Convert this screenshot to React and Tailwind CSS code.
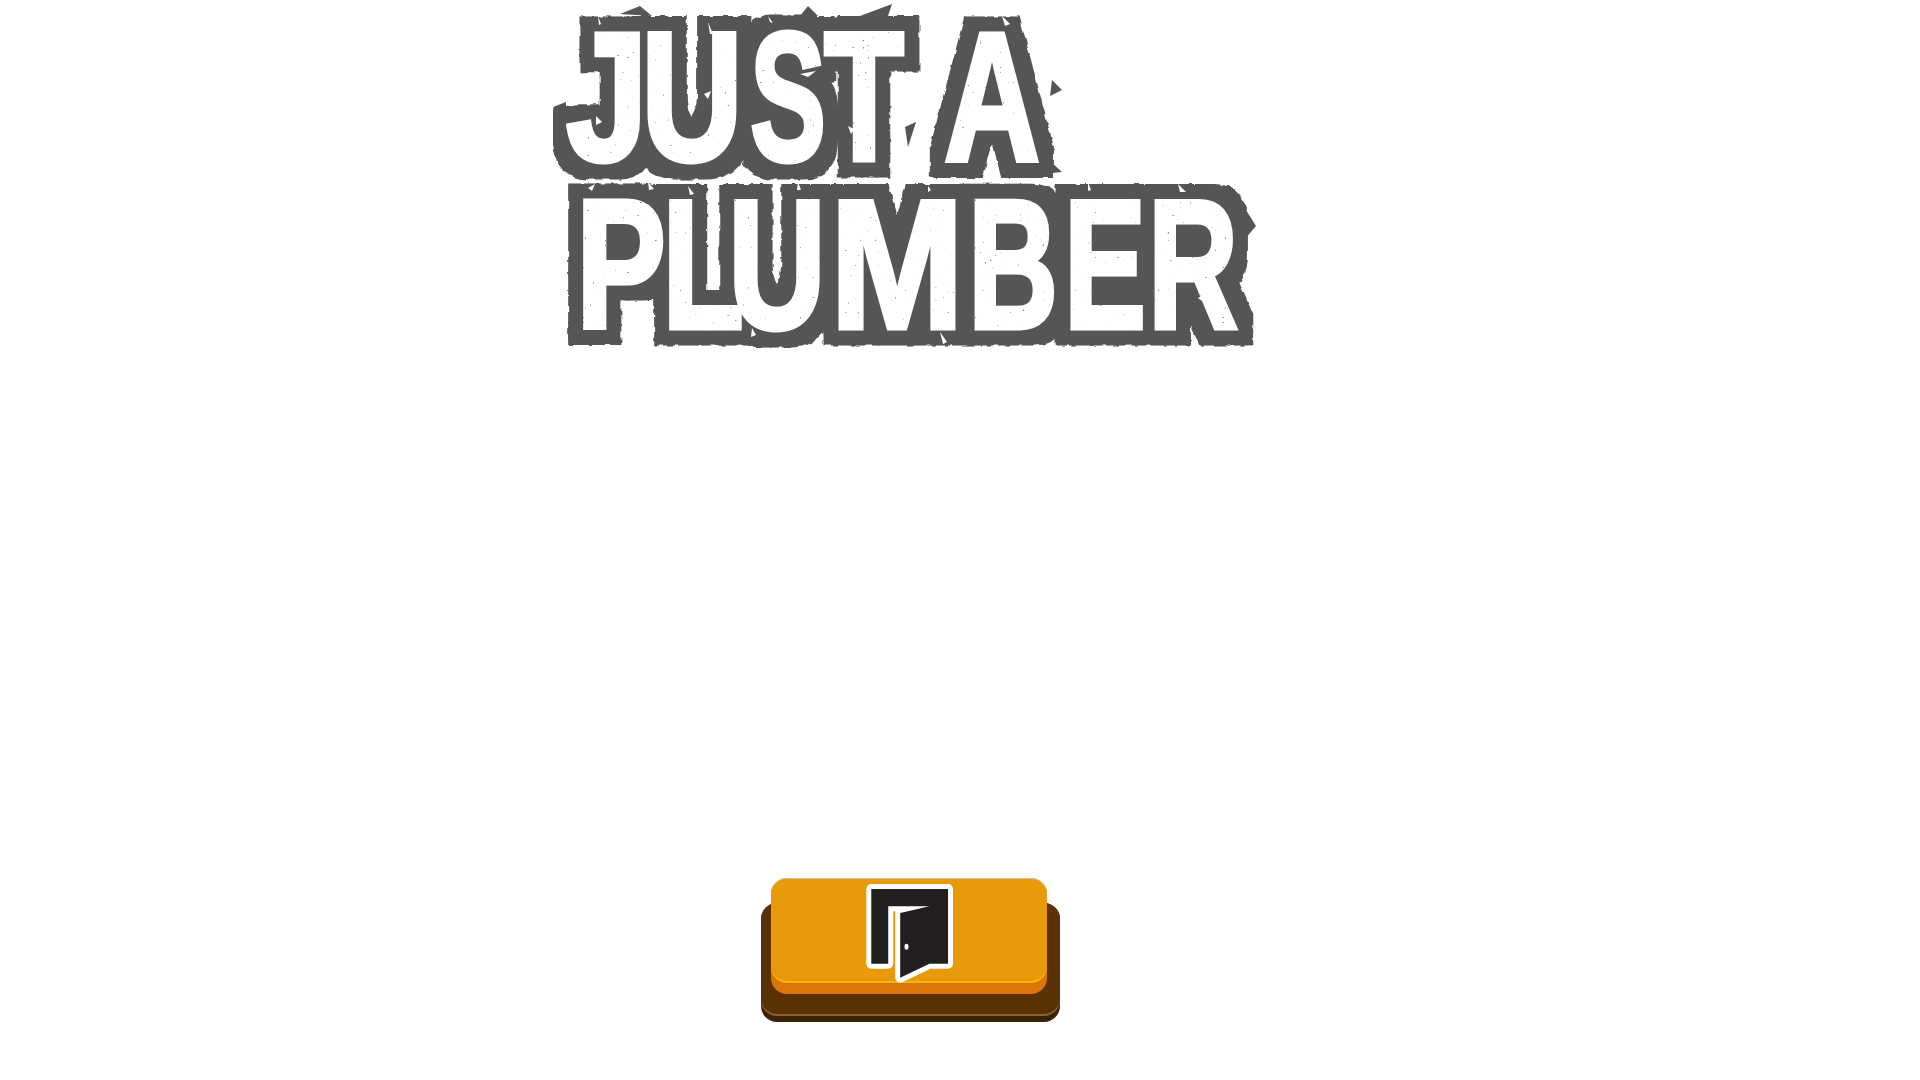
const topLetters = [
  { c: "J", x: 566, w: 82 },
  { c: "U", x: 641, w: 102 },
  { c: "S", x: 750, w: 76 },
  { c: "T", x: 824, w: 80 },
  { c: "A", x: 944, w: 96 },
];

const bottomLetters = [
  { c: "P", x: 576, w: 90 },
  { c: "L", x: 662, w: 82 },
  { c: "U", x: 728, w: 98 },
  { c: "M", x: 830, w: 134 },
  { c: "B", x: 968, w: 90 },
  { c: "E", x: 1064, w: 82 },
  { c: "R", x: 1148, w: 90 },
];

// scratches over the outline, in page coordinates
const scratches = [
  "M598 14l3 8l-2 1z", "M688 18l4 8l-3 1z", "M708 20l5 12l-3 0z", "M768 14l2 6l3 1z", "M832 12l10 -4l-6 8z",
  "M1002 14l8 8l-5 2z", "M704 92l7 -3l-3 8z", "M800 72l16 -3l-8 6z", "M848 124l3 8l3 -5z", "M596 114l6 6l-6 3z",
  "M588 186l7 -4l-3 7z", "M648 180l6 7l-5 1z", "M688 184l6 8l-4 1z", "M798 180l3 8l-4 0z", "M928 184l3 4l-3 2z",
  "M1088 180l3 8l-3 1z", "M1178 182l8 8l-6 0z", "M752 326l4 7l-5 2z", "M1198 296l7 -4l-3 7z", "M816 336l6 4l-5 1z",
  "M940 330l3 12l4 -2z",
];
const spikes = [
  "M620 12 L640 4 L652 14Z", "M800 14 L808 4 L818 14Z", "M860 14 L892 2 L888 14Z",
  "M553 105 L566 100 L566 120Z", "M1052 78 L1062 88 L1050 94Z", "M1040 150 L1062 170 L1042 172Z",
  "M905 125 L916 120 L908 145Z", "M1246 208 L1256 224 L1244 238Z",
];

function Logo() {
  const renderRow = (letters, y) =>
    letters.map((l) => (
      <tspan key={l.c + l.x} x={l.x} y={y} textLength={l.w} lengthAdjust="spacingAndGlyphs">
        {l.c}
      </tspan>
    ));

  return (
    <svg viewBox="553 0 703 346" className="block w-[703px] h-[346px]">
      <defs>
        <filter id="distress" filterUnits="userSpaceOnUse" x="540" y="0" width="730" height="346" colorInterpolationFilters="sRGB">
          <feTurbulence type="fractalNoise" baseFrequency="0.12" numOctaves="2" seed="4" result="wobble" />
          <feMorphology in="SourceAlpha" operator="dilate" radius="15" result="fat" />
          <feDisplacementMap in="fat" in2="wobble" scale="4" xChannelSelector="R" yChannelSelector="G" result="rough" />
          <feFlood floodColor="#555555" />
          <feComposite in2="rough" operator="in" result="outline" />
          {/* a few grey pits on the white letters */}
          <feTurbulence type="fractalNoise" baseFrequency="0.4" numOctaves="1" seed="9" />
          <feColorMatrix values="0 0 0 0 0.55  0 0 0 0 0.55  0 0 0 0 0.55  0 0 14 0 -10.2" />
          <feComposite in2="SourceAlpha" operator="in" result="pits" />
          <feMerge>
            <feMergeNode in="outline" />
            <feMergeNode in="SourceGraphic" />
            <feMergeNode in="pits" />
          </feMerge>
        </filter>
      </defs>
      {spikes.map((d) => <path key={d} d={d} fill="#555555" />)}
      <g filter="url(#distress)">
        <text
          fontFamily="'Liberation Sans', sans-serif"
          fontWeight="700"
          fontSize="184"
          fill="#ffffff"
          stroke="#ffffff"
          strokeWidth="5"
          strokeLinejoin="miter"
        >
          {renderRow(topLetters, 158)}
        </text>
        <text
          fontFamily="'Liberation Sans', sans-serif"
          fontWeight="700"
          fontSize="184"
          fill="#ffffff"
          stroke="#ffffff"
          strokeWidth="5"
          strokeLinejoin="miter"
        >
          {renderRow(bottomLetters, 326)}
        </text>
      </g>
      {scratches.map((d) => <path key={d} d={d} fill="#ffffff" />)}
    </svg>
  );
}

function DoorIcon() {
  return (
    <svg viewBox="376 64 272 304" className="block w-[91px] h-[101px]">
      <path
        d="M397 85H628V310H572L484 352V157L572 137H448V310H397Z"
        fill="#231f20"
        stroke="#ffffff"
        strokeWidth="30"
        strokeLinejoin="round"
        paintOrder="stroke"
      />
      <ellipse cx="503" cy="259" rx="6" ry="9" fill="#ffffff" />
    </svg>
  );
}

export default function App() {
  return (
    <div className="min-h-screen bg-white pl-[553px]">
      <div className="pt-[2px]">
        <Logo />
      </div>

      {/* exit button */}
      <div className="relative ml-[208px] mt-[555px] w-[299px] h-[119px] rounded-[16px] bg-[#3b2204]">
        <div className="h-[113px] rounded-[16px] bg-[#8a6238]">
          <div className="h-[111px] rounded-[16px] bg-[#5a3206]" />
        </div>
        <div className="absolute left-[10px] top-[-25px] w-[276px] h-[116px] rounded-[16px] bg-[#db7506]">
          <div className="h-[105px] rounded-[16px] bg-[#f7b30f]">
            <div className="h-[103px] rounded-[16px] bg-[#e99a0b] border-t border-[#c9c2b0] flex justify-center pt-[3px]">
              <DoorIcon />
            </div>
          </div>
        </div>
      </div>
    </div>
  );
}
